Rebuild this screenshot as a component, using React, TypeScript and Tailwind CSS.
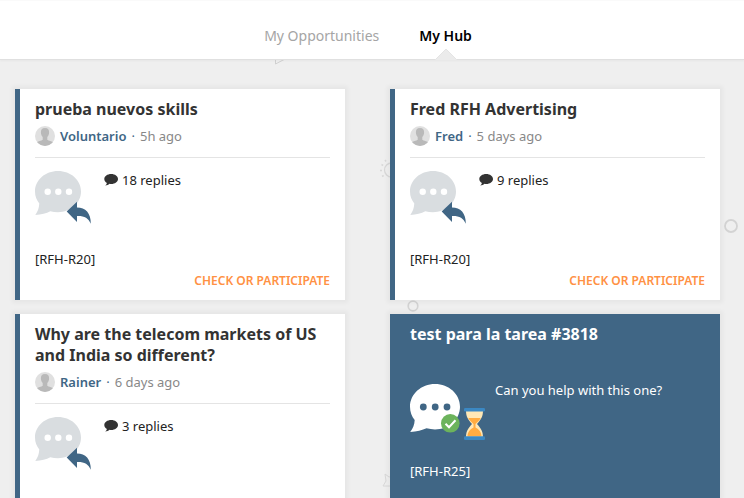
import type { ReactNode } from 'react'

interface RequestCardProps {
  title: string
  author: string
  time: string
  replies: number
  code?: string
}

function Avatar() {
  return (
    <svg viewBox="0 0 20 20" className="size-5 shrink-0" aria-hidden="true">
      <clipPath id="avatar-clip">
        <circle cx="10" cy="10" r="10" />
      </clipPath>
      <g clipPath="url(#avatar-clip)">
        <rect width="20" height="20" fill="#e0e0e0" />
        <path
          d="M10 2C7 2 5.700 3.900 5.900 6.500c.1 2 .9 3.600 1.800 4.600v2.600C6.500 15 3 14.800 1 16.800V20h18v-3.200c-2-2-5.500-1.800-6.700-3.100v-2.600c.9-1 1.700-2.600 1.800-4.600C14.300 3.900 13 2 10 2z"
          fill="#b9b9b9"
        />
      </g>
    </svg>
  )
}

function ReplyBubble() {
  return (
    <svg viewBox="0 0 57 53" className="h-[53px] w-[57px] shrink-0" aria-hidden="true">
      <path
        d="M23 0C10.300 0 0 9 0 20.500c0 5 1.600 8.500 4.300 12C4 37 2.800 40.500.3 44c6-.4 11-1.600 15-3.700 2.400.6 5 .9 7.700.9 12.700 0 23-9.200 23-20.700S35.700 0 23 0z"
        fill="#d9dde0"
      />
      <g fill="#fff">
        <circle cx="12.700" cy="20.800" r="3.200" />
        <circle cx="23.300" cy="20.800" r="3.200" />
        <circle cx="34" cy="20.800" r="3.200" />
      </g>
      <path
        d="M31.700 40.600L42 30.700v5.800c8.500 0 14 5.500 13.800 16.300C53.500 47 49 44.700 42 45v6z"
        fill="#406685"
      />
    </svg>
  )
}

function PendingBubble() {
  return (
    <svg viewBox="0 0 75 56" className="h-14 w-[75px] shrink-0" aria-hidden="true">
      <path
        d="M25 0C11.200 0 0 10 0 22.700c0 5.400 1.800 9.500 4.700 13.300C4.400 40.800 3 44.500.2 48c6.600-.4 12-1.700 16.400-3.700 2.700.7 5.500 1.100 8.400 1.100 13.800 0 25-10 25-22.700S38.800 0 25 0z"
        fill="#fff"
      />
      <g fill="#406685">
        <circle cx="13.300" cy="23" r="3.400" />
        <circle cx="25.200" cy="23" r="3.400" />
        <circle cx="37" cy="23" r="3.400" />
      </g>
      <circle cx="40.300" cy="39.300" r="9.300" fill="#6cb35c" />
      <path d="M35.500 39.700l3.500 3.500 6.500-7" fill="none" stroke="#fff" strokeWidth="2" />
      <path
        d="M56 26h17c0 6.500-1.500 9-6 14 4.500 5 6 7.500 6 14H56c0-6.500 1.500-9 6-14-4.500-5-6-7.500-6-14z"
        fill="#ffe8b6"
      />
      <path
        d="M58.300 34h12.400c-1 2-2.500 3.500-5.200 6v3.500c3.500 2 6 4.500 6 8.800h-14c0-4.300 2.500-6.800 6-8.800V40c-2.700-2.500-4.200-4-5.200-6z"
        fill="#ffac42"
      />
      <rect x="54" y="24" width="21" height="3.500" rx="1.200" fill="#3b88c3" />
      <rect x="54" y="52.300" width="21" height="3.700" rx="1.200" fill="#3b88c3" />
    </svg>
  )
}

function CommentIcon() {
  return (
    <svg viewBox="0 0 14 12" className="h-3 w-3.5 shrink-0" aria-hidden="true">
      <path
        d="M7.200 0C3.400 0 .3 2.200.3 5c0 1.600 1 3 2.600 3.900-.2 1-.8 1.800-1.700 2.600 1.800-.1 3.200-.7 4.300-1.700.5.100 1.100.2 1.700.2C11 10 14 7.800 14 5S11 0 7.200 0z"
        fill="#333"
      />
    </svg>
  )
}

// Faint doodles scattered behind the cards
function Doodles() {
  return (
    <div className="pointer-events-none absolute inset-0 overflow-hidden" aria-hidden="true">
      <svg className="absolute top-0 left-[275px] h-2 w-3" viewBox="0 0 12 8" fill="none" stroke="#d0d0d0">
        <path d="M.5 -1v5L10 -1" />
      </svg>
      <svg className="absolute top-[98px] left-[378px] size-6" viewBox="0 0 24 24" fill="none" stroke="#d8d8d8">
        <circle cx="13.500" cy="12" r="7" strokeWidth="1.300" />
        <path d="M2 12.500h2M3.500 6.500l1.700 1M7 2l1 1.500M4 18.500l1.700-1" strokeWidth="1.500" />
      </svg>
      <svg className="absolute top-[240px] left-[407px] size-3" viewBox="0 0 12 12" fill="none" stroke="#d3d3d3">
        <circle cx="6" cy="6" r="4.800" strokeWidth="1.700" />
      </svg>
      <svg className="absolute top-[159px] left-[724px] size-3.5" viewBox="0 0 14 14" fill="none" stroke="#d3d3d3">
        <circle cx="7" cy="7" r="6" strokeWidth="1.800" />
      </svg>
      <svg className="absolute top-[413px] left-[382px] size-4" viewBox="0 0 16 16" fill="none" stroke="#d8d8d8">
        <path d="M3 1l4 3 5-1-2 4 3 5-5 1-7 0 3-5z" />
      </svg>
    </div>
  )
}

function Card({ highlighted = false, children }: { highlighted?: boolean; children: ReactNode }) {
  return (
    <article
      className={`border-l-5 border-[#406685] px-[15px] pt-2.5 pb-[9px] shadow-[0_0_4px_3px_rgba(0,0,0,0.04)] ${
        highlighted ? 'bg-[#406685] text-white' : 'bg-white text-[#222]'
      }`}
    >
      {children}
    </article>
  )
}

function RequestCard({ title, author, time, replies, code }: RequestCardProps) {
  return (
    <Card>
      <h2 className="text-base leading-[21px] font-bold text-[#333]">{title}</h2>
      <div className="mt-1.5 flex items-center border-b border-[#e4e4e4] pb-[11px] text-[13px] leading-5 text-[#888]">
        <Avatar />
        <a href="#" className="ml-[5px] font-semibold text-[#406685]">
          {author}
        </a>
        <span className="mx-[5px] text-[#406685]">·</span>
        <span>{time}</span>
      </div>
      <div className="mt-[13px] flex items-start gap-3">
        <ReplyBubble />
        <p className="flex items-center gap-1 text-[13px] leading-[18px]">
          <CommentIcon />
          {replies} replies
        </p>
      </div>
      {code && (
        <>
          <p className="mt-[25px] text-[13px] leading-5">{code}</p>
          <div className="mt-0.5 text-right">
            <a href="#" className="block text-xs leading-5 font-semibold text-[#ff9144] uppercase">
              Check or participate
            </a>
          </div>
        </>
      )}
    </Card>
  )
}

export default function App() {
  return (
    <div className="flex min-h-screen flex-col bg-[#efefef] font-['Noto_Sans','Open_Sans',sans-serif]">
      <header className="relative z-10 border-t border-b border-t-[#fafafa] border-b-[#e0e0e0] bg-white shadow-[0_1px_2px_rgba(0,0,0,0.04)]">
        <nav className="flex h-[58px] justify-center gap-10 pt-[23px] pr-2 text-sm leading-6">
          <a href="#" className="text-[#a5a5a5]">
            My Opportunities
          </a>
          <a href="#" className="relative font-semibold text-black">
            My Hub
            <svg
              viewBox="0 0 22 12"
              className="absolute -bottom-px left-1/2 h-3 w-[22px] -translate-x-1/2"
              aria-hidden="true"
            >
              <path d="M0 12L11 1l11 11" fill="#ebebeb" stroke="#e4e4e4" />
            </svg>
          </a>
        </nav>
      </header>

      <main className="relative flex flex-1">
        <Doodles />
        <div className="relative grid flex-1 grid-cols-2 grid-rows-[auto_1fr] gap-x-[45px] gap-y-3.5 pt-[29px] pr-6 pl-[15px]">
          <RequestCard title="prueba nuevos skills" author="Voluntario" time="5h ago" replies={18} code="[RFH-R20]" />
          <RequestCard title="Fred RFH Advertising" author="Fred" time="5 days ago" replies={9} code="[RFH-R20]" />
          <RequestCard
            title="Why are the telecom markets of US and India so different?"
            author="Rainer"
            time="6 days ago"
            replies={3}
          />
          <Card highlighted>
            <h2 className="text-base leading-[21px] font-bold">test para la tarea #3818</h2>
            <div className="mt-[39px] flex items-start gap-2.5">
              <PendingBubble />
              <p className="-mt-1 text-[13px] leading-5">Can you help with this one?</p>
            </div>
            <p className="mt-[21px] text-[13px] leading-5">[RFH-R25]</p>
          </Card>
        </div>
      </main>
    </div>
  )
}
